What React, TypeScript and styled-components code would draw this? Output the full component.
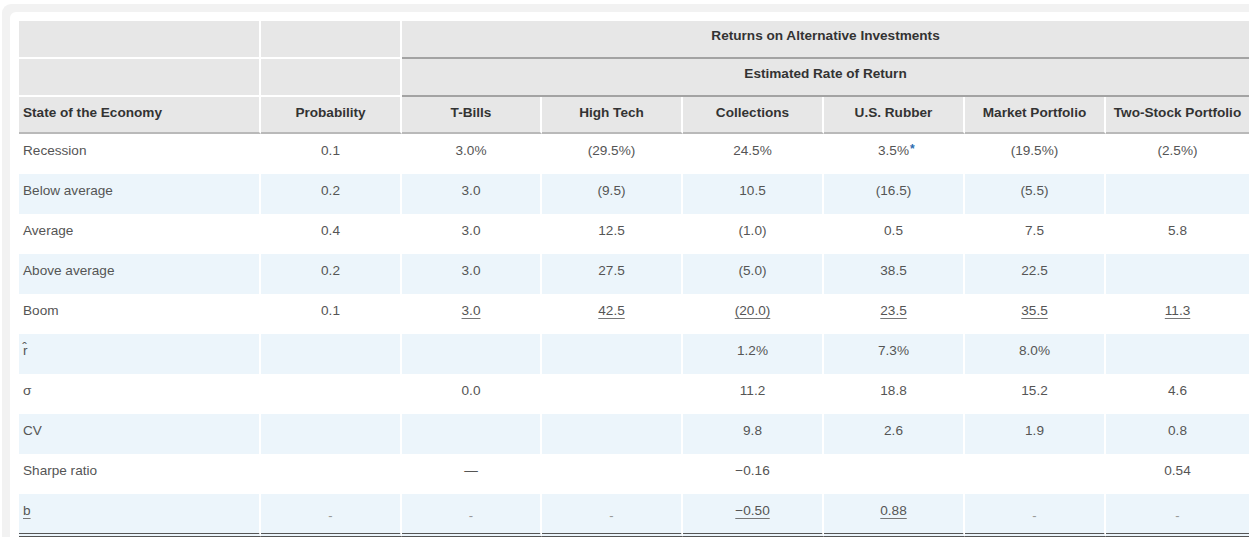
import styled, { createGlobalStyle } from 'styled-components';

const GlobalStyle = createGlobalStyle`
  html, body {
    margin: 0;
    padding: 0;
    background: #fff;
  }
  body {
    font-family: 'Liberation Sans', Arial, sans-serif;
    overflow: hidden;
  }
`;

const columns = [242, 141, 140, 141, 141, 141, 141, 143];
const assets = ['T-Bills', 'High Tech', 'Collections', 'U.S. Rubber', 'Market Portfolio', 'Two-Stock Portfolio'];

// '_' = underlined, '*' = footnote mark, '-' = empty dash
const rows: { label: string; prob: string; values: string[] }[] = [
  { label: 'Recession', prob: '0.1', values: ['3.0%', '(29.5%)', '24.5%', '3.5%*', '(19.5%)', '(2.5%)'] },
  { label: 'Below average', prob: '0.2', values: ['3.0', '(9.5)', '10.5', '(16.5)', '(5.5)', ''] },
  { label: 'Average', prob: '0.4', values: ['3.0', '12.5', '(1.0)', '0.5', '7.5', '5.8'] },
  { label: 'Above average', prob: '0.2', values: ['3.0', '27.5', '(5.0)', '38.5', '22.5', ''] },
  { label: 'Boom', prob: '0.1', values: ['_3.0', '_42.5', '_(20.0)', '_23.5', '_35.5', '_11.3'] },
  { label: 'r̂', prob: '', values: ['', '', '1.2%', '7.3%', '8.0%', ''] },
  { label: 'σ', prob: '', values: ['0.0', '', '11.2', '18.8', '15.2', '4.6'] },
  { label: 'CV', prob: '', values: ['', '', '9.8', '2.6', '1.9', '0.8'] },
  { label: 'Sharpe ratio', prob: '', values: ['—', '', '−0.16', '', '', '0.54'] },
  { label: '_b', prob: '-', values: ['-', '-', '_−0.50', '_0.88', '-', '-'] },
];

const Value = ({ raw }: { raw: string }) => {
  if (raw === '-') return <Dash>-</Dash>;
  let text = raw;
  const under = text.startsWith('_');
  if (under) text = text.slice(1);
  const star = text.endsWith('*');
  if (star) text = text.slice(0, -1);
  const parts = text.split('%');
  const body =
    parts.length > 1 ? (
      <>
        {parts[0]}
        <Pct>%</Pct>
        {parts[1]}
      </>
    ) : (
      text
    );
  return (
    <Mark $under={under}>
      {body}
      {star && <Star>*</Star>}
    </Mark>
  );
};

const App = () => {
  return (
    <>
      <GlobalStyle />
      <Frame>
        <Panel>
          <Table>
            <colgroup>
              {columns.map((w, i) => (
                <col key={i} style={{ width: w }} />
              ))}
            </colgroup>
            <thead>
              <tr>
                <HeadCell $line="white" />
                <HeadCell $line="white" />
                <HeadCell colSpan={6} $line="grey">
                  Returns on Alternative Investments
                </HeadCell>
              </tr>
              <tr>
                <HeadCell $line="white" />
                <HeadCell $line="white" />
                <HeadCell colSpan={6} $line="grey">
                  Estimated Rate of Return
                </HeadCell>
              </tr>
              <tr>
                <HeadCell $line="heavy" $left>
                  State of the Economy
                </HeadCell>
                <HeadCell $line="heavy">Probability</HeadCell>
                {assets.map((a) => (
                  <HeadCell key={a} $line="heavy">
                    {a}
                  </HeadCell>
                ))}
              </tr>
            </thead>
            <tbody>
              {rows.map((r, i) => (
                <BodyRow key={i} $striped={i % 2 === 1}>
                  <Cell $left>
                    <Value raw={r.label} />
                  </Cell>
                  <Cell>
                    <Value raw={r.prob} />
                  </Cell>
                  {r.values.map((v, j) => (
                    <Cell key={j}>
                      <Value raw={v} />
                    </Cell>
                  ))}
                </BodyRow>
              ))}
            </tbody>
          </Table>
        </Panel>
      </Frame>
    </>
  );
};

export default App;

const Frame = styled.div`
  margin: 4px 0 0 2px;
  border-top: 8px solid #f2f2f2;
  border-left: 8px solid #f2f2f2;
  border-top-left-radius: 9px;
  background: #f2f2f2;
`;

const Panel = styled.div`
  background: #fff;
  border-top-left-radius: 6px;
  padding: 9px 0 0 9px;
`;

const Table = styled.table`
  width: 1230px;
  table-layout: fixed;
  border-collapse: separate;
  border-spacing: 0;
  font-size: 13.6px;
  line-height: 20px;
`;

const HeadCell = styled.th<{ $line: 'white' | 'grey' | 'heavy'; $left?: boolean }>`
  height: ${(p) => (p.$line === 'heavy' ? 37 : 38)}px;
  box-sizing: border-box;
  padding: ${(p) => (p.$line === 'heavy' ? 6 : 5)}px 4px 0;
  vertical-align: top;
  background: #e7e7e7;
  color: #333;
  font-weight: bold;
  white-space: nowrap;
  text-align: ${(p) => (p.$left ? 'left' : 'center')};
  border-right: 2px solid #fff;
  border-bottom: 2px solid
    ${(p) => (p.$line === 'white' ? '#fff' : p.$line === 'grey' ? '#a3a3a3' : '#b9b9b9')};

  &:last-child {
    border-right: none;
  }
`;

const BodyRow = styled.tr<{ $striped: boolean }>`
  background: ${(p) => (p.$striped ? '#ecf5fb' : '#fff')};

  &:last-child td {
    border-bottom: 4px double #555;
    height: 43px;
  }
`;

const Cell = styled.td<{ $left?: boolean }>`
  height: 40px;
  box-sizing: border-box;
  padding: 7px 4px 0;
  vertical-align: top;
  color: #555;
  white-space: nowrap;
  text-align: ${(p) => (p.$left ? 'left' : 'center')};
  border-right: 2px solid #fff;

  &:last-child {
    border-right: none;
  }
`;

const Mark = styled.span<{ $under: boolean }>`
  position: relative;
  text-decoration: ${(p) => (p.$under ? 'underline' : 'none')};
  text-decoration-color: #777;
  text-underline-offset: 3px;
`;

const Pct = styled.span`
  margin-right: -8px;
  padding-right: 8px;
`;

const Star = styled.span`
  position: absolute;
  left: 100%;
  top: -4px;
  margin-left: 1px;
  color: #2b6cb0;
  font-size: 12px;
  font-weight: bold;
`;

const Dash = styled.span`
  display: inline-block;
  color: #999;
  font-size: 13px;
  vertical-align: -5px;
`;
